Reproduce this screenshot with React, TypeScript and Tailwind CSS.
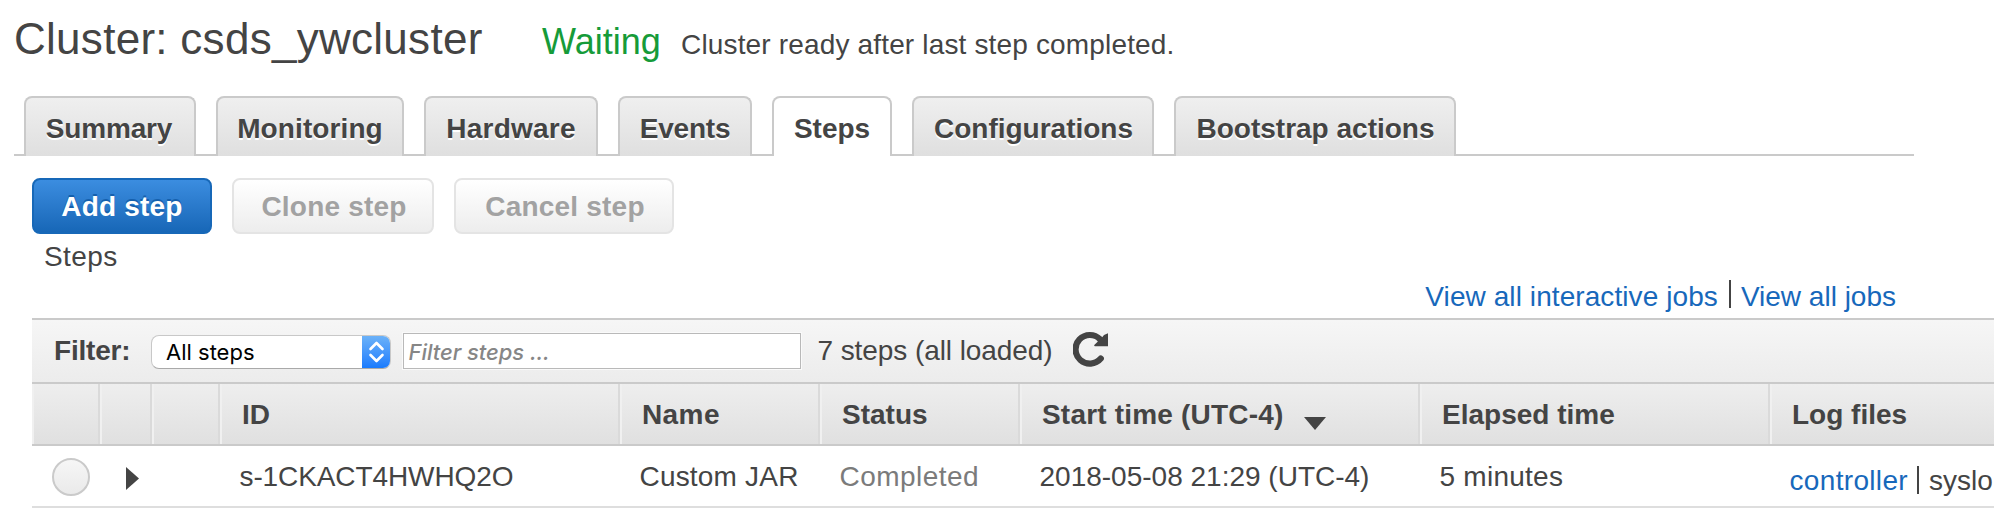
import React from "react";
import clsx from "clsx";

const tabs = [
  { label: "Summary", size: "w-[172px] pr-[2px] tracking-[-0.17px]" },
  { label: "Monitoring", size: "w-[188px] tracking-[0.1px]" },
  { label: "Hardware", size: "w-[174px] tracking-[0.25px]" },
  { label: "Events", size: "w-[134px] tracking-[-0.2px]" },
  { label: "Steps", size: "w-[120px]", active: true },
  { label: "Configurations", size: "w-[242px] pl-[1px]" },
  { label: "Bootstrap actions", size: "w-[282px] pl-[1px]" },
];

function Tab({ label, size, active }: { label: string; size: string; active?: boolean }) {
  return (
    <button
      className={clsx(
        "h-[60px] shrink-0 whitespace-nowrap rounded-t-lg border-2 border-b-0 border-[#cacaca] pt-[3px] text-center font-bold leading-8",
        active
          ? "bg-white"
          : "bg-linear-to-b from-[#efefef] to-[#dfdfdf] [text-shadow:0_2px_0_#fff]",
        size,
      )}
    >
      {label}
    </button>
  );
}

function DisabledButton({ label, size }: { label: string; size: string }) {
  return (
    <button
      disabled
      className={clsx(
        "h-14 rounded-lg border-2 border-[#e4e4e4] bg-linear-to-b from-white to-[#ededed] pl-[2px] pt-[2px] font-bold leading-8 tracking-[0.2px] text-[#a2a2a2]",
        size,
      )}
    >
      {label}
    </button>
  );
}

function HeadCell({ size, children }: { size: string; children?: React.ReactNode }) {
  return (
    <div
      className={clsx(
        "flex h-[60px] shrink-0 items-center whitespace-nowrap border-l-2 border-r-2 border-l-[#f0f0f0] border-r-[#dadada] pl-5 pt-[2px] font-bold leading-8",
        size,
      )}
    >
      {children}
    </div>
  );
}

function Cell({ size, children }: { size: string; children?: React.ReactNode }) {
  return (
    <div className={clsx("flex shrink-0 items-center whitespace-nowrap pl-[19.5px] leading-8", size)}>
      {children}
    </div>
  );
}

export default function App() {
  return (
    <div className="h-[508px] w-[1994px] overflow-hidden bg-white font-['Liberation_Sans',Arial,sans-serif] text-[28px] leading-8 text-[#444]">
      <header className="flex h-24 items-baseline whitespace-nowrap pl-[14px] pt-[9px]">
        <h1 className="w-[528px] text-[44px] leading-[60px] tracking-[0.28px]">Cluster: csds_ywcluster</h1>
        <span className="w-[139px] text-4xl text-[#169b39]">Waiting</span>
        <span className="tracking-[0.16px]">Cluster ready after last step completed.</span>
      </header>

      <nav className="ml-[14px] flex h-[60px] w-[1900px] gap-5 pl-[10px] shadow-[inset_0_-2px_0_#cacaca]">
        {tabs.map((tab) => (
          <Tab key={tab.label} {...tab} />
        ))}
      </nav>

      <div className="mt-[22px] flex gap-5 pl-8">
        <button className="h-14 w-[180px] rounded-lg border-2 border-[#1768b8] bg-linear-to-b from-[#3b8de0] to-[#1767b7] pt-[2px] font-bold leading-8 tracking-[0.2px] text-white [text-shadow:0_-2px_0_#1560ad]">
          Add step
        </button>
        <DisabledButton label="Clone step" size="w-[202px]" />
        <DisabledButton label="Cancel step" size="w-[220px]" />
      </div>

      <div className="mt-[7px] pl-[44px] tracking-[0.4px]">Steps</div>

      <div className="mt-2 flex h-[37px] w-[1896px] justify-end gap-[11px] whitespace-nowrap text-[#1768bb]">
        <a className="tracking-[0.08px]">View all interactive jobs</a>
        <span className="-mt-px h-[28px] w-0.5 bg-[#444]" />
        <a className="-ml-px">View all jobs</a>
      </div>

      <section className="ml-8">
        <div className="flex h-[66px] items-center border-y-2 border-[#cacaca] bg-linear-to-b from-[#f6f6f6] to-[#ececec]">
          <label className="w-[119px] pl-[22px] font-bold tracking-[-0.2px]">Filter:</label>
          <div className="mt-[2px] flex h-[34px] w-[240px] justify-between overflow-hidden rounded-lg border border-[#c8c8c8] border-b-[#a9a9a9] bg-white font-[Inter,sans-serif] text-[22px] text-black">
            <span className="pl-[14px] leading-8">All steps</span>
            <span className="-my-px -mr-px flex w-[29px] items-center justify-center bg-linear-to-b from-[#6db3f8] to-[#1579fd]">
              <svg width="17" height="24" viewBox="0 0 17 24" fill="none" stroke="white" strokeWidth="2.6">
                <path d="M2.5 9 8.5 3 14.5 9M2.5 15 8.5 21 14.5 15" strokeLinecap="round" strokeLinejoin="round" />
              </svg>
            </span>
          </div>
          <div className="ml-3 flex h-9 w-[398px] items-center border border-[#b9b9b9] bg-white pl-[4.5px] pt-px font-[Inter,sans-serif] text-[22px] font-medium italic tracking-[-0.05px] text-[#868686] shadow-[0_0_0_1px_#fafafa]">
            Filter steps ...
          </div>
          <span className="ml-[16.5px] tracking-[-0.08px]">7 steps (all loaded)</span>
          <svg className="ml-[20.5px] mt-[-4px]" width="35" height="36" viewBox="0 0 35 36">
            <path d="M27 8.2A14.3 14.3 0 1 0 27.8 27.5" fill="none" stroke="#444" strokeWidth="6.2" strokeLinecap="round" />
            <path d="M35 2.2V15.2H21.800L21 14.200L29 6.500L31 4Z" fill="#444" />
          </svg>
        </div>

        <div className="flex h-[62px] border-b-2 border-[#cacaca] bg-linear-to-b from-[#eeeeee] to-[#e0e0e0]">
          <HeadCell size="w-[68px]" />
          <HeadCell size="w-[52px]" />
          <HeadCell size="w-[68px]" />
          <HeadCell size="w-[400px]">ID</HeadCell>
          <HeadCell size="w-[200px] tracking-[0.4px]">Name</HeadCell>
          <HeadCell size="w-[200px]">Status</HeadCell>
          <HeadCell size="w-[400px]">
            <span className="tracking-[0.19px]">Start time (UTC-4)</span>
            <svg className="ml-[21px] mt-[17px]" width="22" height="13" viewBox="0 0 22 13">
              <path d="M0 0H22L11 13Z" fill="#444" />
            </svg>
          </HeadCell>
          <HeadCell size="w-[350px]">Elapsed time</HeadCell>
          <HeadCell size="w-[400px]">Log files</HeadCell>
        </div>

        <div className="flex h-[62px] border-b-2 border-[#dedede] pt-[2px]">
          <Cell size="w-[68px]">
            <span className="size-[38px] rounded-full border-2 border-[#cacaca] bg-linear-to-b from-[#f6f6f6] to-[#eaeaea]" />
          </Cell>
          <Cell size="w-[52px]">
            <svg className="ml-[6px] mt-[3px]" width="13" height="23" viewBox="0 0 13 23">
              <path d="M0 0 13 11.5 0 23Z" fill="#444" />
            </svg>
          </Cell>
          <Cell size="w-[68px]" />
          <Cell size="w-[400px] tracking-[-0.1px]">s-1CKACT4HWHQ2O</Cell>
          <Cell size="w-[200px] tracking-[0.19px]">Custom JAR</Cell>
          <Cell size="w-[200px] tracking-[0.45px] text-[#7b7b7b]">Completed</Cell>
          <Cell size="w-[400px]">2018-05-08 21:29 (UTC-4)</Cell>
          <Cell size="w-[350px] tracking-[0.25px]">5 minutes</Cell>
          <Cell size="w-[400px] pt-[8px]">
            <a className="w-[127.5px] tracking-[0.33px] text-[#1768bb]">controller</a>
            <span className="mb-[2px] h-[28px] w-0.5 bg-[#444]" />
            <span className="ml-[10px]">syslo</span>
          </Cell>
        </div>
      </section>
    </div>
  );
}
